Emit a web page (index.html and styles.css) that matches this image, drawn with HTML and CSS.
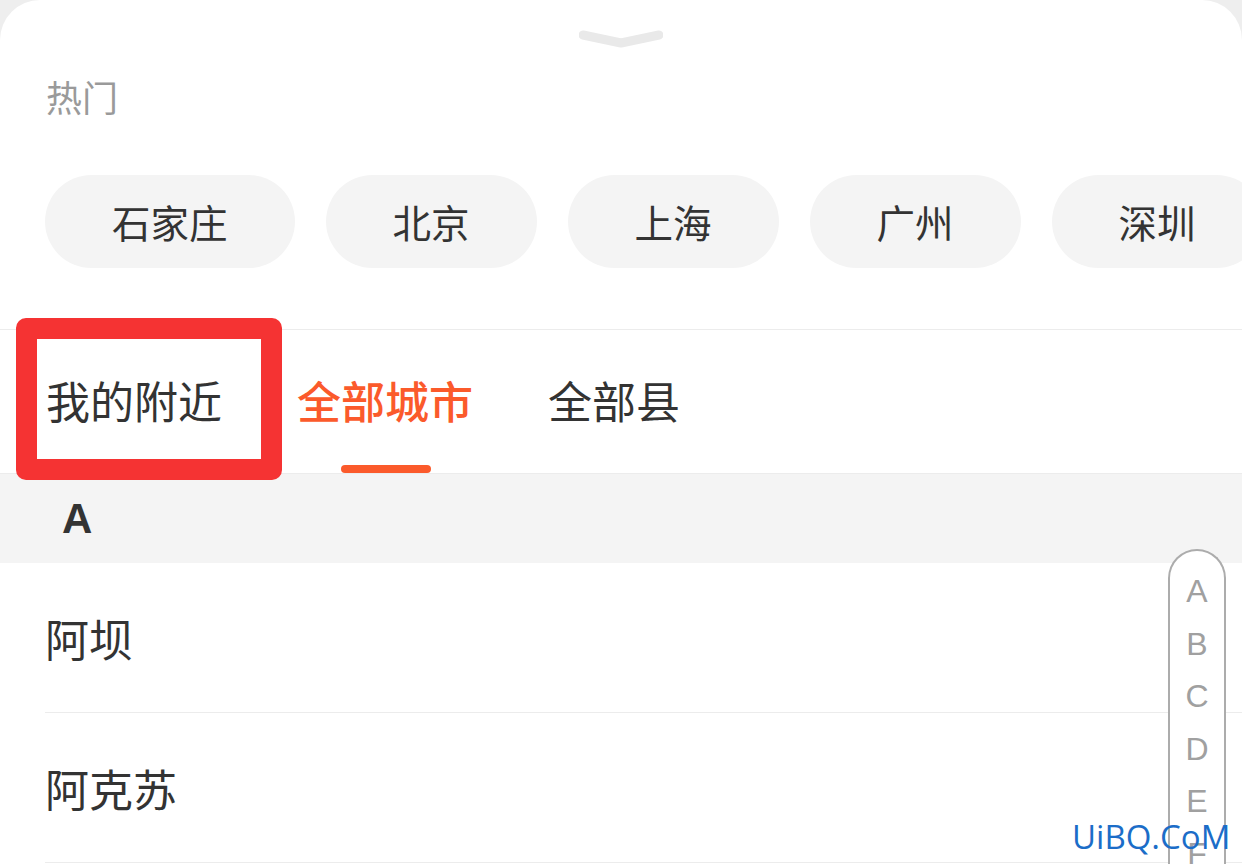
FILE: index.html
```html
<!DOCTYPE html>
<html lang="zh-CN">
<head>
    <meta charset="UTF-8">
    <meta name="viewport" content="width=device-width, initial-scale=1.0">
    <title>选择城市</title>
    <link rel="stylesheet" href="styles.css">
</head>
<body>
    <div class="sheet">
        <div class="handle">
            <svg width="84" height="20" viewBox="0 0 84 20">
                <polyline points="4,5 42,13 80,5" fill="none" stroke="#e9e9e9" stroke-width="9" stroke-linecap="round" stroke-linejoin="round"/>
            </svg>
        </div>

        <div class="hot-title">热门</div>
        <div class="chips">
            <div class="chip">石家庄</div>
            <div class="chip">北京</div>
            <div class="chip">上海</div>
            <div class="chip">广州</div>
            <div class="chip">深圳</div>
        </div>

        <div class="tabs">
            <div class="tab">我的附近</div>
            <div class="tab active">全部城市</div>
            <div class="tab">全部县</div>
        </div>

        <div class="section-head">A</div>
        <div class="city">阿坝</div>
        <div class="city">阿克苏</div>

        <!-- 标注框 -->
        <div class="mark"></div>

        <div class="index-bar">
            <span>A</span>
            <span>B</span>
            <span>C</span>
            <span>D</span>
            <span>E</span>
            <span>F</span>
        </div>

        <div class="watermark">UiBQ.CoM</div>
    </div>
</body>
</html>
```

FILE: styles.css
```css
body {
    margin: 0;
    background-color: #eeeeee;
    font-family: "Noto Sans CJK SC", "Noto Sans", sans-serif;
    color: #333;
}
.sheet {
    position: relative;
    height: 864px;
    overflow: hidden;
    background-color: #fff;
    border-radius: 40px 40px 0 0;
}
.handle {
    height: 60px;
    display: flex;
    justify-content: center;
    padding-top: 30px;
    box-sizing: border-box;
}
.hot-title {
    padding-left: 46px;
    font-size: 36px;
    line-height: 72px;
    color: #9a9a9a;
}
.chips {
    display: flex;
    gap: 31px;
    padding: 0 45px;
    margin-top: 43px;
    margin-bottom: 61px;
    white-space: nowrap;
}
.chip {
    flex-shrink: 0;
    height: 93px;
    line-height: 93px;
    padding: 0 67px;
    border-radius: 47px;
    background-color: #f4f4f4;
    font-size: 38.5px;
    color: #333;
}
.tabs {
    display: flex;
    gap: 75px;
    padding-left: 46px;
    height: 143px;
    border-top: 1px solid #ececec;
    border-bottom: 1px solid #ececec;
}
.tab {
    position: relative;
    font-size: 44px;
    line-height: 141px;
    color: #333;
}
.tab.active {
    color: #fb5a2b;
    font-weight: 500;
}
.tab.active::after {
    content: "";
    position: absolute;
    left: 44px;
    bottom: 0;
    width: 90px;
    height: 8px;
    border-radius: 4px;
    background-color: #fb5a2b;
}
.section-head {
    height: 89px;
    line-height: 89px;
    padding-left: 62px;
    background-color: #f4f4f4;
    font-family: "Liberation Sans", sans-serif;
    font-size: 42px;
    font-weight: bold;
    color: #333;
}
.city {
    margin-left: 45px;
    height: 149px;
    line-height: 151px;
    border-bottom: 1px solid #ececec;
    font-size: 44px;
    color: #333;
}
.mark {
    position: absolute;
    left: 16px;
    top: 318px;
    width: 266px;
    height: 162px;
    box-sizing: border-box;
    border: 21px solid #f53333;
    border-radius: 10px;
}
.index-bar {
    position: absolute;
    left: 1168px;
    top: 549px;
    width: 58px;
    height: 340px;
    box-sizing: border-box;
    padding-top: 14px;
    border: 2px solid #acacac;
    border-bottom: none;
    border-radius: 29px 29px 0 0;
    background-color: #fff;
    display: flex;
    flex-direction: column;
    align-items: center;
}
.index-bar span {
    font-family: "Liberation Sans", sans-serif;
    font-size: 32px;
    line-height: 52.5px;
    color: #a0a0a0;
}
.watermark {
    position: absolute;
    left: 1072px;
    top: 814px;
    font-family: "Open Sans", sans-serif;
    font-size: 33px;
    color: #1b6dc8;
}
```
